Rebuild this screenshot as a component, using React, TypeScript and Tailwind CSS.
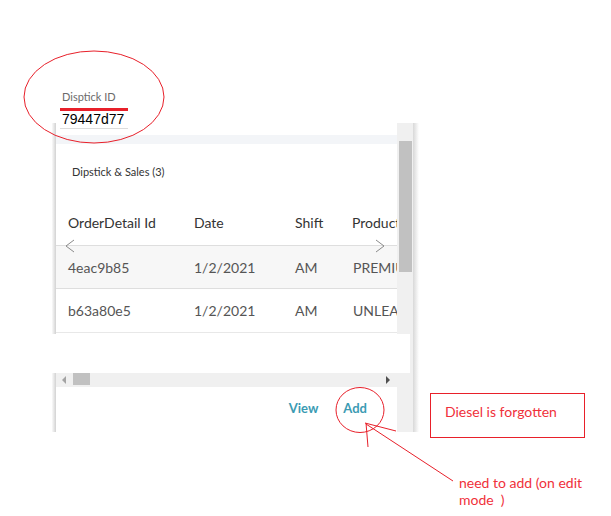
import React from "react";

export default function App() {
  return (
    <div
      className="relative w-[611px] h-[516px] bg-white overflow-hidden"
      style={{ fontFamily: "Lato, 'Open Sans', sans-serif" }}
    >
      {/* Field */}
      <div className="relative z-10 pl-[60px] pt-[90px]">
        <div className="pl-[2px] h-[14px] leading-[14px] text-[11px] text-[#6b6b6b]">Disptick ID</div>
        <div className="mt-[4px] h-[3px] w-[68px] bg-[#e8202a]" />
        <div
          className="pl-[2px] h-[17px] leading-[17px] text-[14px] text-black"
          style={{ fontFamily: "'Liberation Sans', Arial, sans-serif" }}
        >
          79447d77
        </div>
        <div className="h-px w-[68px] bg-[#dcdcdc]" />
      </div>

      {/* Panel */}
      <div className="relative -mt-[6px] ml-[47px] flex h-[309px] w-[373px]">
        <div className="w-[9px] h-full bg-gradient-to-r from-white via-white to-[#d2d2d2]" />
        <div className="w-[341px] h-full flex flex-col bg-white overflow-hidden">
          <div className="h-[12px] shrink-0" />
          <div className="h-[9px] shrink-0 bg-[#f3f5f8]" />
          <div className="h-[55px] shrink-0 pl-[16px] pt-[21px] text-[11px] leading-[14px] text-[#333]">
            Dipstick &amp; Sales (3)
          </div>
          {/* Table */}
          <div className="relative shrink-0 overflow-hidden">
            <div className="flex h-[46px] items-center text-[14px] text-[#333] whitespace-nowrap">
              <div className="w-[127px] shrink-0 pl-[12px]">OrderDetail Id</div>
              <div className="w-px h-[40px] bg-[#e6e6e6]" />
              <div className="w-[100px] shrink-0 pl-[11px]">Date</div>
              <div className="w-px h-[40px] bg-[#e6e6e6]" />
              <div className="w-[55px] shrink-0 pl-[12px]">Shift</div>
              <div className="w-px h-[40px] bg-[#e6e6e6]" />
              <div className="w-[120px] shrink-0 pl-[14px]">Product</div>
            </div>
            <div className="flex h-[44px] items-center border-t border-b border-[#dedede] bg-[#f7f7f7] text-[14px] text-[#555] whitespace-nowrap">
              <div className="w-[128px] shrink-0 pl-[12px]">4eac9b85</div>
              <div className="w-[101px] shrink-0 pl-[10px]">1/2/2021</div>
              <div className="w-[56px] shrink-0 pl-[10px]">AM</div>
              <div className="w-[120px] shrink-0 pl-[12px]">PREMIUM</div>
            </div>
            <div className="flex h-[44px] items-center border-b border-[#e8e8e8] bg-white text-[14px] text-[#555] whitespace-nowrap">
              <div className="w-[128px] shrink-0 pl-[12px]">b63a80e5</div>
              <div className="w-[101px] shrink-0 pl-[10px]">1/2/2021</div>
              <div className="w-[56px] shrink-0 pl-[10px]">AM</div>
              <div className="w-[120px] shrink-0 pl-[12px]">UNLEADED</div>
            </div>
            {/* nav chevrons */}
            <svg className="absolute left-[7px] top-[40px]" width="14" height="14" viewBox="0 0 14 14">
              <path d="M11 1 L3 7 L11 13" fill="none" stroke="#8a8a8a" strokeWidth="1" />
            </svg>
            <svg className="absolute left-[317px] top-[40px]" width="14" height="14" viewBox="0 0 14 14">
              <path d="M3 1 L11 7 L3 13" fill="none" stroke="#8a8a8a" strokeWidth="1" />
            </svg>
          </div>
          <div className="h-[39px] shrink-0" />
          {/* horizontal scrollbar */}
          <div className="h-[15px] shrink-0 flex items-center bg-[#f0f0f0]">
            <svg className="ml-[6px]" width="5" height="8" viewBox="0 0 5 8">
              <path d="M4 0 L0 4 L4 8 Z" fill="#a3a3a3" />
            </svg>
            <div className="ml-[6px] h-[13px] w-[17px] self-start bg-[#c1c1c1]" />
            <div className="flex-1" />
            <svg className="mr-[6px]" width="5" height="8" viewBox="0 0 5 8">
              <path d="M0 0 L4 4 L0 8 Z" fill="#505050" />
            </svg>
          </div>
          <div className="flex-1 flex items-start justify-end pt-[12px] pr-[30px] gap-[25px] text-[13px] font-bold text-[#3b9bb3]">
            <span>View</span>
            <span>Add</span>
          </div>
        </div>
        {/* vertical scrollbar */}
        <div className="w-[16px] h-full bg-[#f0f0f0] pt-[18px] pl-[2px]">
          <div className="w-[13px] h-[131px] bg-[#c1c1c1]" />
        </div>
        <div className="w-[6px] h-full bg-gradient-to-r from-[#d8d8d8] to-white" />
        {/* white overlay band */}
        <div className="absolute left-[1px] top-[211px] h-[39px] w-[362px] bg-white" />
      </div>

      {/* Annotations */}
      <svg className="pointer-events-none absolute left-0 top-0" width="611" height="516" viewBox="0 0 611 516">
        <ellipse cx="94" cy="97" rx="70" ry="46" fill="none" stroke="#e8202a" strokeWidth="1" />
        <ellipse cx="360" cy="410" rx="24" ry="22.5" fill="none" stroke="#e8202a" strokeWidth="1" />
        <line x1="366" y1="424" x2="453" y2="481" stroke="#e8202a" strokeWidth="1" />
        <line x1="365" y1="423" x2="396" y2="431" stroke="#e8202a" strokeWidth="1" />
        <line x1="366" y1="423" x2="368" y2="447" stroke="#e8202a" strokeWidth="1" />
      </svg>
      <div
        className="absolute left-[430px] top-[393px] h-[45px] w-[155px] border border-[#e8202a] pl-[14px] pt-[9px] text-[14px] leading-[18px] text-[#f0303a]"
        style={{ fontFamily: "Lato, 'Open Sans', sans-serif" }}
      >
        Diesel is forgotten
      </div>
      <div
        className="absolute left-[459px] top-[474px] text-[14px] leading-[17px] text-[#f0303a]"
        style={{ fontFamily: "Lato, 'Open Sans', sans-serif" }}
      >
        <div>need to add (on edit</div>
        <div>mode&nbsp; )</div>
      </div>
    </div>
  );
}
